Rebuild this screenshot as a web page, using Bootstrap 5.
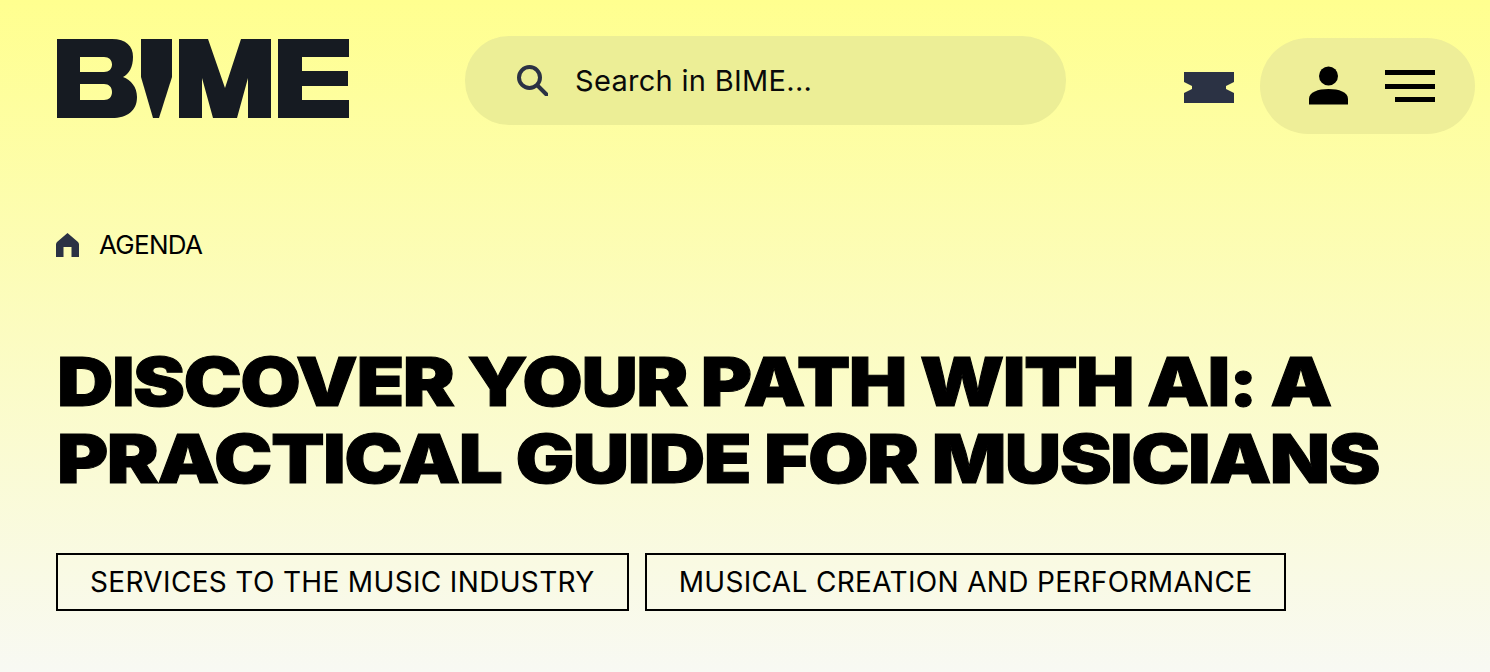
<!DOCTYPE html>
<html lang="en">
<head>
  <meta charset="UTF-8">
  <title>Discover your path with AI</title>
  <meta name="viewport" content="width=device-width, initial-scale=1">
  <link href="https://cdn.jsdelivr.net/npm/bootstrap@5.3.0/dist/css/bootstrap.min.css" rel="stylesheet">
  <style>
    html, body { height: 100%; }
    body {
      font-family: Inter, "Liberation Sans", sans-serif;
      color: #000;
      background: linear-gradient(180deg, #ffff8f 0, #f8f9f3 672px);
      overflow: hidden;
    }
    .page-wrap { padding: 36px 15px 0 57px; }
    .brand-logo { width: 292px; height: 80px; margin-top: 3px; display: block; }
    .search-pill {
      width: 601px; height: 89px; margin-left: 116px;
      padding-left: 52px; border-radius: 44px;
      background: #ecee96;
      font-size: 29px; letter-spacing: .3px; color: #0a0a0a;
    }
    .search-pill svg { margin-right: 27px; }
    .ticket-ico { margin-left: auto; margin-right: 26px; margin-top: 36px; }
    .user-pill {
      width: 215px; height: 96px; margin-top: 2px;
      padding-left: 49px; border-radius: 48px;
      background: #eeee98;
    }
    .person-ico { margin-bottom: 2px; }
    .menu-ico { margin-left: auto; margin-right: 40px; }
    .crumb-row { margin-top: 98px; height: 26px; font-size: 26px; letter-spacing: -.7px; line-height: 26px; }
    .crumb-row svg { margin-right: 20px; margin-left: -1px; }
    .event-title {
      margin: 85px 0 0; width: fit-content;
      font-size: 68px; font-weight: 900; line-height: 77px; color: #000;
      letter-spacing: -1.4px;
      white-space: nowrap; transform: scaleX(1.15); transform-origin: left top;
      -webkit-text-stroke: 1px #000;
    }
    .tag-row { margin-top: 56px; margin-left: -1px; gap: 16px; }
    .tag-box {
      height: 58px; padding: 0 32px;
      border: 2px solid #000;
      font-size: 28px; letter-spacing: .34px; line-height: 54px; white-space: nowrap;
    }
  </style>
</head>
<body>
<div class="page-wrap">

  <!-- Cabecera -->
  <div class="d-flex align-items-start">
    <svg class="brand-logo flex-shrink-0" viewBox="57 39 292 80" fill="#161b22" role="img" aria-label="BIME">
      <path fill-rule="evenodd" d="M57 39H112C126 39 133 46 133 57C133 67 129 74 123 77C131 80 137 87 137 97C137 111 127 118 112 118H57ZM80 57V72H104C109 72 112 69 112 64.500C112 60 109 57 104 57ZM80 84V100H104C109 100 112 97 112 92C112 87 109 84 104 84Z"/>
      <path d="M141 39H172V77L159 118H153L141 77Z"/>
      <path d="M179 39H208L225 88L241 39H271V118H248V78L237 118H213L202 78V118H179Z"/>
      <path d="M278 39H349V57H302V71H348V86H302V100H349V118H278Z"/>
    </svg>

    <div class="search-pill d-flex align-items-center">
      <svg width="31" height="31" viewBox="0 0 31 31" fill="none" stroke="#2b3244" stroke-width="4" stroke-linecap="round">
        <circle cx="12.500" cy="12.500" r="10.500"/>
        <path d="M20.500 20.500L29.500 29.500"/>
      </svg>
      <span>Search in BIME...</span>
    </div>

    <svg class="ticket-ico" width="50" height="31" viewBox="0 0 50 31" fill="#2b3244">
      <path d="M0 0H50V10L42 14V17L50 21V31H0V21L8 17V14L0 10Z"/>
    </svg>

    <div class="user-pill d-flex align-items-center flex-shrink-0">
      <svg class="person-ico" width="39" height="39" viewBox="0 0 39 39" fill="#000">
        <circle cx="19.500" cy="10" r="9.500"/>
        <path d="M0 38.500V33C0 26 9 23 19.500 23S39 26 39 33V38.500Z"/>
      </svg>
      <svg class="menu-ico" width="50" height="32" viewBox="0 0 50 32" fill="#000">
        <rect x="0" y="0" width="50" height="5"/>
        <rect x="0" y="14" width="50" height="5"/>
        <rect x="10" y="27" width="40" height="5"/>
      </svg>
    </div>
  </div>

  <!-- Migas -->
  <div class="crumb-row d-flex align-items-center">
    <svg width="23" height="25" viewBox="0 0 23 25" fill="#2b3244">
      <path d="M11.500 0L22 9Q23 10 23 11.500V24H15.500V14H7.500V24H0V11.500Q0 10 1 9Z"/>
    </svg>
    <span>AGENDA</span>
  </div>

  <h1 class="event-title">DISCOVER YOUR PATH WITH AI: A<br>PRACTICAL GUIDE FOR MUSICIANS</h1>

  <div class="tag-row d-flex">
    <div class="tag-box">SERVICES TO THE MUSIC INDUSTRY</div>
    <div class="tag-box">MUSICAL CREATION AND PERFORMANCE</div>
  </div>
</div>

<script src="https://cdn.jsdelivr.net/npm/bootstrap@5.3.0/dist/js/bootstrap.bundle.min.js"></script>
</body>
</html>
